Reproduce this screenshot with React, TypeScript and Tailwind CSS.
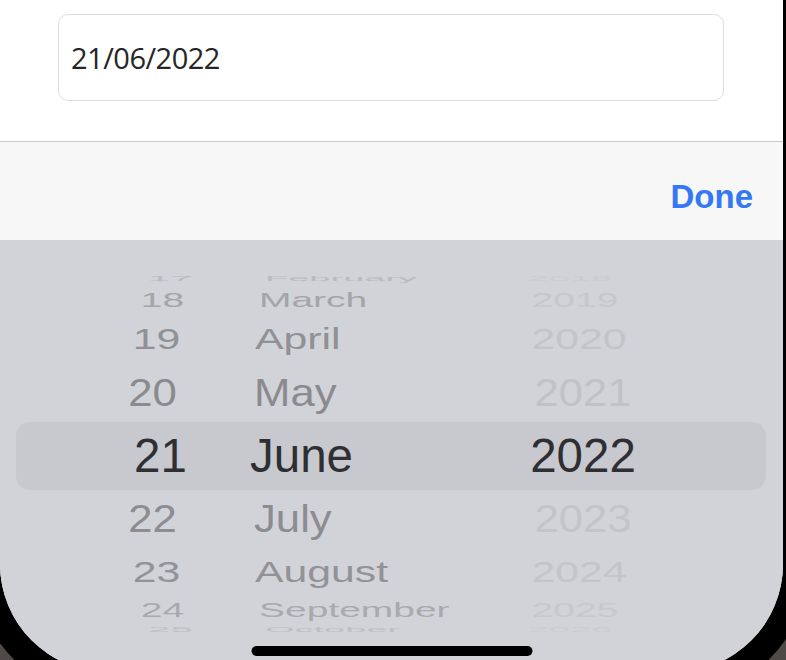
type WheelRow = {
  day: string;
  month: string;
  year: string;
  h: string;
  dayCls: string;
  monthCls: string;
  yearCls: string;
  selected?: boolean;
};

// rows of the wheel, from top to bottom; far rows are squashed like a cylinder
const rows: WheelRow[] = [
  {
    day: "17",
    month: "February",
    year: "2018",
    h: "h-[16px]",
    dayCls: "scale-x-[0.85] scale-y-[0.15] translate-x-[10px] text-[#b9babe]",
    monthCls: "scale-x-[0.8] scale-y-[0.15] translate-x-[5px] text-[#b9babe]",
    yearCls: "scale-x-[0.8] scale-y-[0.15] -translate-x-[13px] text-[#cbccd1]",
  },
  {
    day: "18",
    month: "March",
    year: "2019",
    h: "h-[27px]",
    dayCls: "scale-x-[0.82] scale-y-[0.41] translate-x-[2px] text-[#a4a5a9]",
    monthCls: "scale-x-[0.82] scale-y-[0.41] text-[#a4a5a9]",
    yearCls: "scale-x-[0.82] scale-y-[0.41] -translate-x-[8px] text-[#c6c7cc]",
  },
  {
    day: "19",
    month: "April",
    year: "2020",
    h: "h-[50px]",
    dayCls: "scale-x-[0.9] scale-y-[0.64] -translate-x-[4px] text-[#909095]",
    monthCls: "scale-x-[0.9] scale-y-[0.64] text-[#909095]",
    yearCls: "scale-x-[0.9] scale-y-[0.64] -translate-x-[4px] text-[#c3c4c9]",
  },
  {
    day: "20",
    month: "May",
    year: "2021",
    h: "h-[58px]",
    dayCls: "scale-x-[0.92] scale-y-[0.8] -translate-x-[8px] text-[#8a8a8f]",
    monthCls: "scale-x-[0.92] scale-y-[0.8] text-[#8a8a8f]",
    yearCls: "scale-x-[0.92] scale-y-[0.8] text-[#c1c2c7]",
  },
  {
    day: "21",
    month: "June",
    year: "2022",
    h: "h-[68px]",
    dayCls: "text-[#2f2f33]",
    monthCls: "text-[#2f2f33]",
    yearCls: "text-[#2f2f33]",
    selected: true,
  },
  {
    day: "22",
    month: "July",
    year: "2023",
    h: "h-[57px]",
    dayCls: "scale-x-[0.92] scale-y-[0.8] -translate-x-[8px] text-[#8c8c91]",
    monthCls: "scale-x-[0.92] scale-y-[0.8] text-[#8c8c91]",
    yearCls: "scale-x-[0.92] scale-y-[0.8] text-[#c3c4c9]",
  },
  {
    day: "23",
    month: "August",
    year: "2024",
    h: "h-[50px]",
    dayCls: "scale-x-[0.9] scale-y-[0.64] -translate-x-[4px] text-[#929297]",
    monthCls: "scale-x-[0.9] scale-y-[0.64] text-[#929297]",
    yearCls: "scale-x-[0.9] scale-y-[0.64] -translate-x-[4px] text-[#c4c5ca]",
  },
  {
    day: "24",
    month: "September",
    year: "2025",
    h: "h-[28px]",
    dayCls: "scale-x-[0.82] scale-y-[0.41] translate-x-[2px] text-[#a9aaae]",
    monthCls: "scale-x-[0.82] scale-y-[0.41] text-[#a9aaae]",
    yearCls: "scale-x-[0.82] scale-y-[0.41] -translate-x-[8px] text-[#c7c8cd]",
  },
  {
    day: "25",
    month: "October",
    year: "2026",
    h: "h-[10px]",
    dayCls: "scale-x-[0.85] scale-y-[0.15] translate-x-[10px] text-[#bebfc3]",
    monthCls: "scale-x-[0.8] scale-y-[0.15] translate-x-[5px] text-[#bebfc3]",
    yearCls: "scale-x-[0.8] scale-y-[0.15] -translate-x-[13px] text-[#cbccd1]",
  },
];

function Wheel() {
  return (
    <div className="h-[360px] overflow-hidden">
      <div className="-mt-[5px] flex flex-col">
        {rows.map((r) => (
          <div
            key={r.day}
            className={`${r.h} ml-[16px] mr-[17px] flex items-center ${
              r.selected ? "bg-[#c8c9ce] rounded-[14px]" : ""
            }`}
          >
            <div
              className={`ml-[96px] w-[97px] shrink-0 text-center leading-none ${r.dayCls}`}
            >
              {r.day}
            </div>
            <div
              className={`ml-[41px] w-[200px] shrink-0 origin-[50px_50%] leading-none ${r.monthCls}`}
            >
              {r.month}
            </div>
            <div
              className={`w-[266px] shrink-0 text-center leading-none ${r.yearCls}`}
            >
              {r.year}
            </div>
          </div>
        ))}
      </div>
    </div>
  );
}

export default function App() {
  return (
    <div className="w-[786px] h-[660px] overflow-hidden bg-[#4d4a47]">
      {/* phone bezel */}
      <div className="-ml-[26px] w-[835px] h-[698px] pl-[26px] bg-black rounded-b-[134px]">
        <div className="relative w-[783px] h-[672px] overflow-hidden rounded-b-[108px] bg-white flex flex-col">
          {/* page with date field */}
          <div className="h-[141px] shrink-0 pt-[14px] pl-[58px]">
            <div className="w-[666px] h-[87px] rounded-[10px] border border-[#dedede] flex items-center pl-[12px] font-['Open_Sans',sans-serif] text-[29px] tracking-[-0.5px] text-[#262626]">
              21/06/2022
            </div>
          </div>

          {/* accessory toolbar */}
          <div className="h-[99px] shrink-0 border-t border-[#c9c9c9] bg-[#f7f7f7] flex justify-end pt-[38px] pr-[30px]">
            <span className="font-['Liberation_Sans',Arial,sans-serif] font-bold text-[33px] leading-none text-[#3478f6]">
              Done
            </span>
          </div>

          {/* wheel picker */}
          <div className="flex-1 bg-[#d1d3d8] pt-[36px] font-['Liberation_Sans',Arial,sans-serif] text-[47.5px]">
            <Wheel />
          </div>

          {/* home indicator */}
          <div className="absolute bottom-[16px] left-1/2 -translate-x-1/2 w-[281px] h-[10px] rounded-full bg-black" />
        </div>
      </div>
    </div>
  );
}
